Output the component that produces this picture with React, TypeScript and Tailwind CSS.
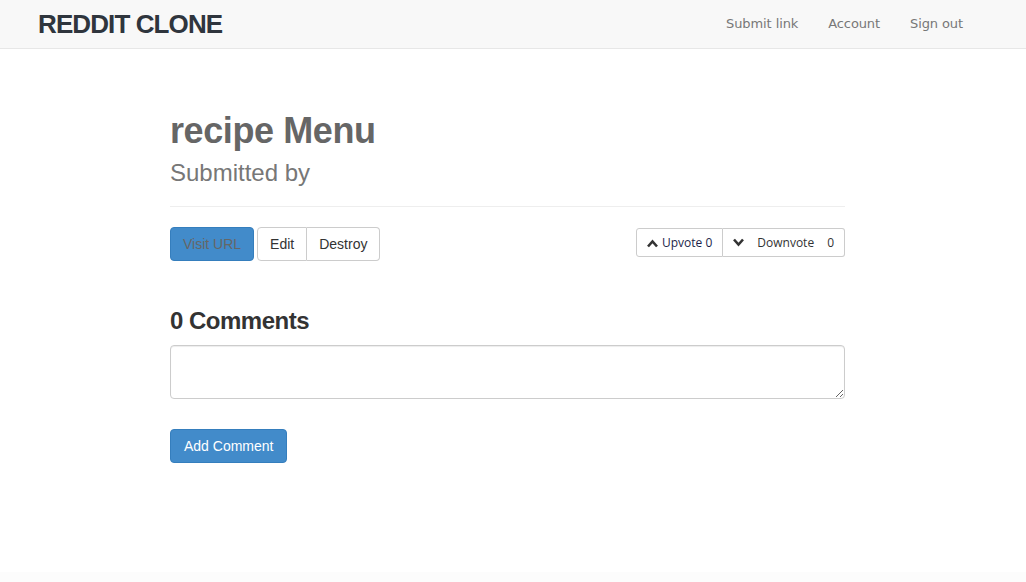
import React from 'react';

const Chevron = ({ dir }: { dir: 'up' | 'down' }) => (
  <svg width="11" height="9" viewBox="0 0 11 9" className="inline-block">
    {dir === 'up' ? (
      <path d="M1 7.5 L5.5 2.5 L10 7.5" fill="none" stroke="currentColor" strokeWidth="2.6" />
    ) : (
      <path d="M1 1.5 L5.5 6.5 L10 1.5" fill="none" stroke="currentColor" strokeWidth="2.6" />
    )}
  </svg>
);

const App: React.FC = () => {
  return (
    <div className="min-h-[582px] bg-white flex flex-col" style={{ fontFamily: '"Liberation Sans", Arial, sans-serif' }}>
      {/* Navbar */}
      <nav className="h-[49px] bg-[#f8f8f8] border-b border-[#e7e7e7] flex items-center justify-between pl-[38px] pr-[63px]">
        <span className="text-[26px] font-bold text-[#2f353d] tracking-[-0.9px]">REDDIT CLONE</span>
        <div className="flex gap-[30px] text-[13px] text-[#777] font-['DejaVu_Sans',Verdana,sans-serif] tracking-[-0.1px]">
          <a href="#">Submit link</a>
          <a href="#">Account</a>
          <a href="#">Sign out</a>
        </div>
      </nav>

      {/* Main */}
      <main className="ml-[170px] w-[675px] pt-[62px] flex-1">
        <h1 className="text-[36px] font-bold text-[#666] leading-[40px] tracking-[-0.4px]">recipe Menu</h1>
        <h3 className="text-[24px] text-[#777] mt-[8px] leading-[28px]">Submitted by</h3>
        <hr className="mt-[19px] border-t border-[#eee]" />

        <div className="mt-[20px] flex items-start justify-between">
          <div className="flex gap-[3px]">
            <button className="h-[34px] px-[12px] bg-[#428bca] border border-[#357ebd] rounded-[4px] text-[14px] text-[#666]">
              Visit URL
            </button>
            <div className="flex">
              <button className="h-[34px] px-[12px] bg-white border border-[#ccc] rounded-l-[4px] text-[14px] text-[#333]">
                Edit
              </button>
              <button className="h-[34px] px-[12px] bg-white border border-l-0 border-[#ccc] rounded-r-[4px] text-[14px] text-[#333]">
                Destroy
              </button>
            </div>
          </div>
          <div className="flex mt-[1px] font-['Open_Sans',sans-serif] text-[12px]">
            <button className="h-[29px] px-[10px] bg-white border border-[#ccc] rounded-l-[3px] text-[#1c1f4a] flex items-center gap-[4px]">
              <span className="text-[#333]"><Chevron dir="up" /></span>
              Upvote 0
            </button>
            <button className="h-[29px] px-[10px] bg-white border border-l-0 border-[#ccc] rounded-r-[3px] text-[#333] flex items-center">
              <Chevron dir="down" />
              <span className="ml-[13px]">Downvote</span>
              <span className="ml-[13px]">0</span>
            </button>
          </div>
        </div>

        <h3 className="mt-[46px] text-[24px] text-[#333] leading-[28px] font-bold tracking-[-0.5px]">0 Comments</h3>
        <textarea className="mt-[10px] block w-full h-[54px] border border-[#ccc] rounded-[4px] shadow-[inset_0_1px_1px_rgba(0,0,0,0.075)]" />

        <button className="mt-[30px] h-[34px] px-[13px] bg-[#428bca] border border-[#357ebd] rounded-[4px] text-[14px] text-white">
          Add Comment
        </button>
      </main>

      <footer className="h-[10px] bg-[#fcfcfc]" />
    </div>
  );
};

export default App;
